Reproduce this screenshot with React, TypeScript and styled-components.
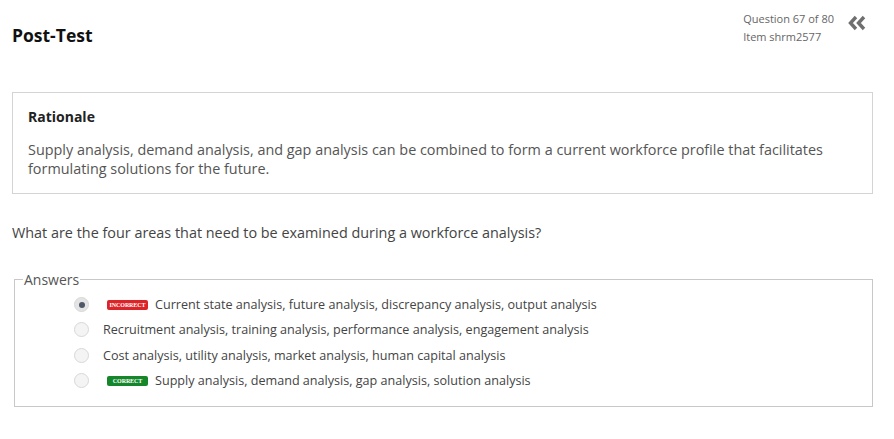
import React from "react";
import styled, { createGlobalStyle } from "styled-components";

const GlobalStyle = createGlobalStyle`
  body {
    margin: 0;
    background: #fff;
    font-family: "Open Sans", "Liberation Sans", sans-serif;
    color: #444;
  }
`;

const Page = styled.div`
  padding: 0 21px 0 12px;
  width: 894px;
  box-sizing: border-box;
`;

const Header = styled.div`
  display: flex;
  justify-content: space-between;
  align-items: flex-start;
  height: 92px;
`;

const Title = styled.h1`
  margin: 23px 0 0;
  font-size: 17.5px;
  font-weight: 700;
  color: #111;
`;

const HeaderRight = styled.div`
  display: flex;
  align-items: flex-start;
  gap: 13px;
  margin-top: 10px;
  margin-right: 6px;
`;

const Meta = styled.div`
  font-size: 11px;
  line-height: 18px;
  color: #666;
`;

const CollapseButton = styled.button`
  border: 0;
  background: none;
  padding: 0;
  margin-top: 5px;
  cursor: pointer;
  display: flex;
`;

const RationaleBox = styled.div`
  border: 1px solid #d4d4d4;
  padding: 14px 15px 15px;
`;

const RationaleTitle = styled.div`
  font-size: 14px;
  font-weight: 700;
  color: #222;
  margin-bottom: 14px;
`;

const RationaleText = styled.div`
  font-size: 14.4px;
  line-height: 19px;
  color: #555;
`;

const Question = styled.p`
  margin: 29px 0 28px;
  font-size: 14.4px;
  color: #444;
`;

const Answers = styled.fieldset`
  margin: 0 0 0 2px;
  padding: 3px 0 13px;
  border: 1px solid #c8c8c8;
`;

const Legend = styled.legend`
  font-size: 14px;
  color: #555;
  padding: 0 1px;
  margin-left: 8px;
`;

const Row = styled.label`
  display: flex;
  align-items: center;
  height: 25.3px;
  padding-left: 59px;
  font-size: 12.6px;
  color: #444;
`;

const Radio = styled.span<{ $checked?: boolean }>`
  width: 13px;
  height: 13px;
  border-radius: 50%;
  border: 1px solid #d8d8d8;
  background: ${(p) => (p.$checked ? "#e4e4e4" : "#f4f4f4")};
  display: flex;
  align-items: center;
  justify-content: center;
  margin-right: 14px;
  flex-shrink: 0;

  &::after {
    content: "";
    width: 6px;
    height: 6px;
    border-radius: 50%;
    background: ${(p) => (p.$checked ? "#4d5868" : "transparent")};
  }
`;

const Badge = styled.span<{ $ok: boolean }>`
  display: inline-flex;
  align-items: center;
  justify-content: center;
  width: 41px;
  height: 10px;
  border-radius: 2px;
  background: ${(p) => (p.$ok ? "#15872a" : "#dc2428")};
  color: #fff;
  font-size: 6px;
  font-weight: 700;
  font-family: "Liberation Serif", serif;
  letter-spacing: -0.1px;
  margin: 0 7px 0 4px;
`;

type Answer = { text: string; checked?: boolean; badge?: "correct" | "incorrect" };

const answers: Answer[] = [
  {
    text: "Current state analysis, future analysis, discrepancy analysis, output analysis",
    checked: true,
    badge: "incorrect",
  },
  { text: "Recruitment analysis, training analysis, performance analysis, engagement analysis" },
  { text: "Cost analysis, utility analysis, market analysis, human capital analysis" },
  { text: "Supply analysis, demand analysis, gap analysis, solution analysis", badge: "correct" },
];

const ChevronsLeft = () => (
  <svg width="20" height="16" viewBox="0 0 20 16">
    <path
      d="M9 2 L3.5 8 L9 14 M17 2 L11.5 8 L17 14"
      fill="none"
      stroke="#6f6f6f"
      strokeWidth="3.4"
      strokeLinejoin="miter"
    />
  </svg>
);

export default function App() {
  return (
    <Page>
      <GlobalStyle />
      <Header>
        <Title>Post-Test</Title>
        <HeaderRight>
          <Meta>
            <div>Question 67 of 80</div>
            <div>Item shrm2577</div>
          </Meta>
          <CollapseButton aria-label="Collapse">
            <ChevronsLeft />
          </CollapseButton>
        </HeaderRight>
      </Header>
      <RationaleBox>
        <RationaleTitle>Rationale</RationaleTitle>
        <RationaleText>
          Supply analysis, demand analysis, and gap analysis can be combined to form a current
          workforce profile that facilitates formulating solutions for the future.
        </RationaleText>
      </RationaleBox>
      <Question>What are the four areas that need to be examined during a workforce analysis?</Question>
      <Answers>
        <Legend>Answers</Legend>
        {answers.map((a) => (
          <Row key={a.text}>
            <Radio $checked={a.checked} />
            {a.badge && (
              <Badge $ok={a.badge === "correct"}>
                {a.badge === "correct" ? "CORRECT" : "INCORRECT"}
              </Badge>
            )}
            {a.text}
          </Row>
        ))}
      </Answers>
    </Page>
  );
}
